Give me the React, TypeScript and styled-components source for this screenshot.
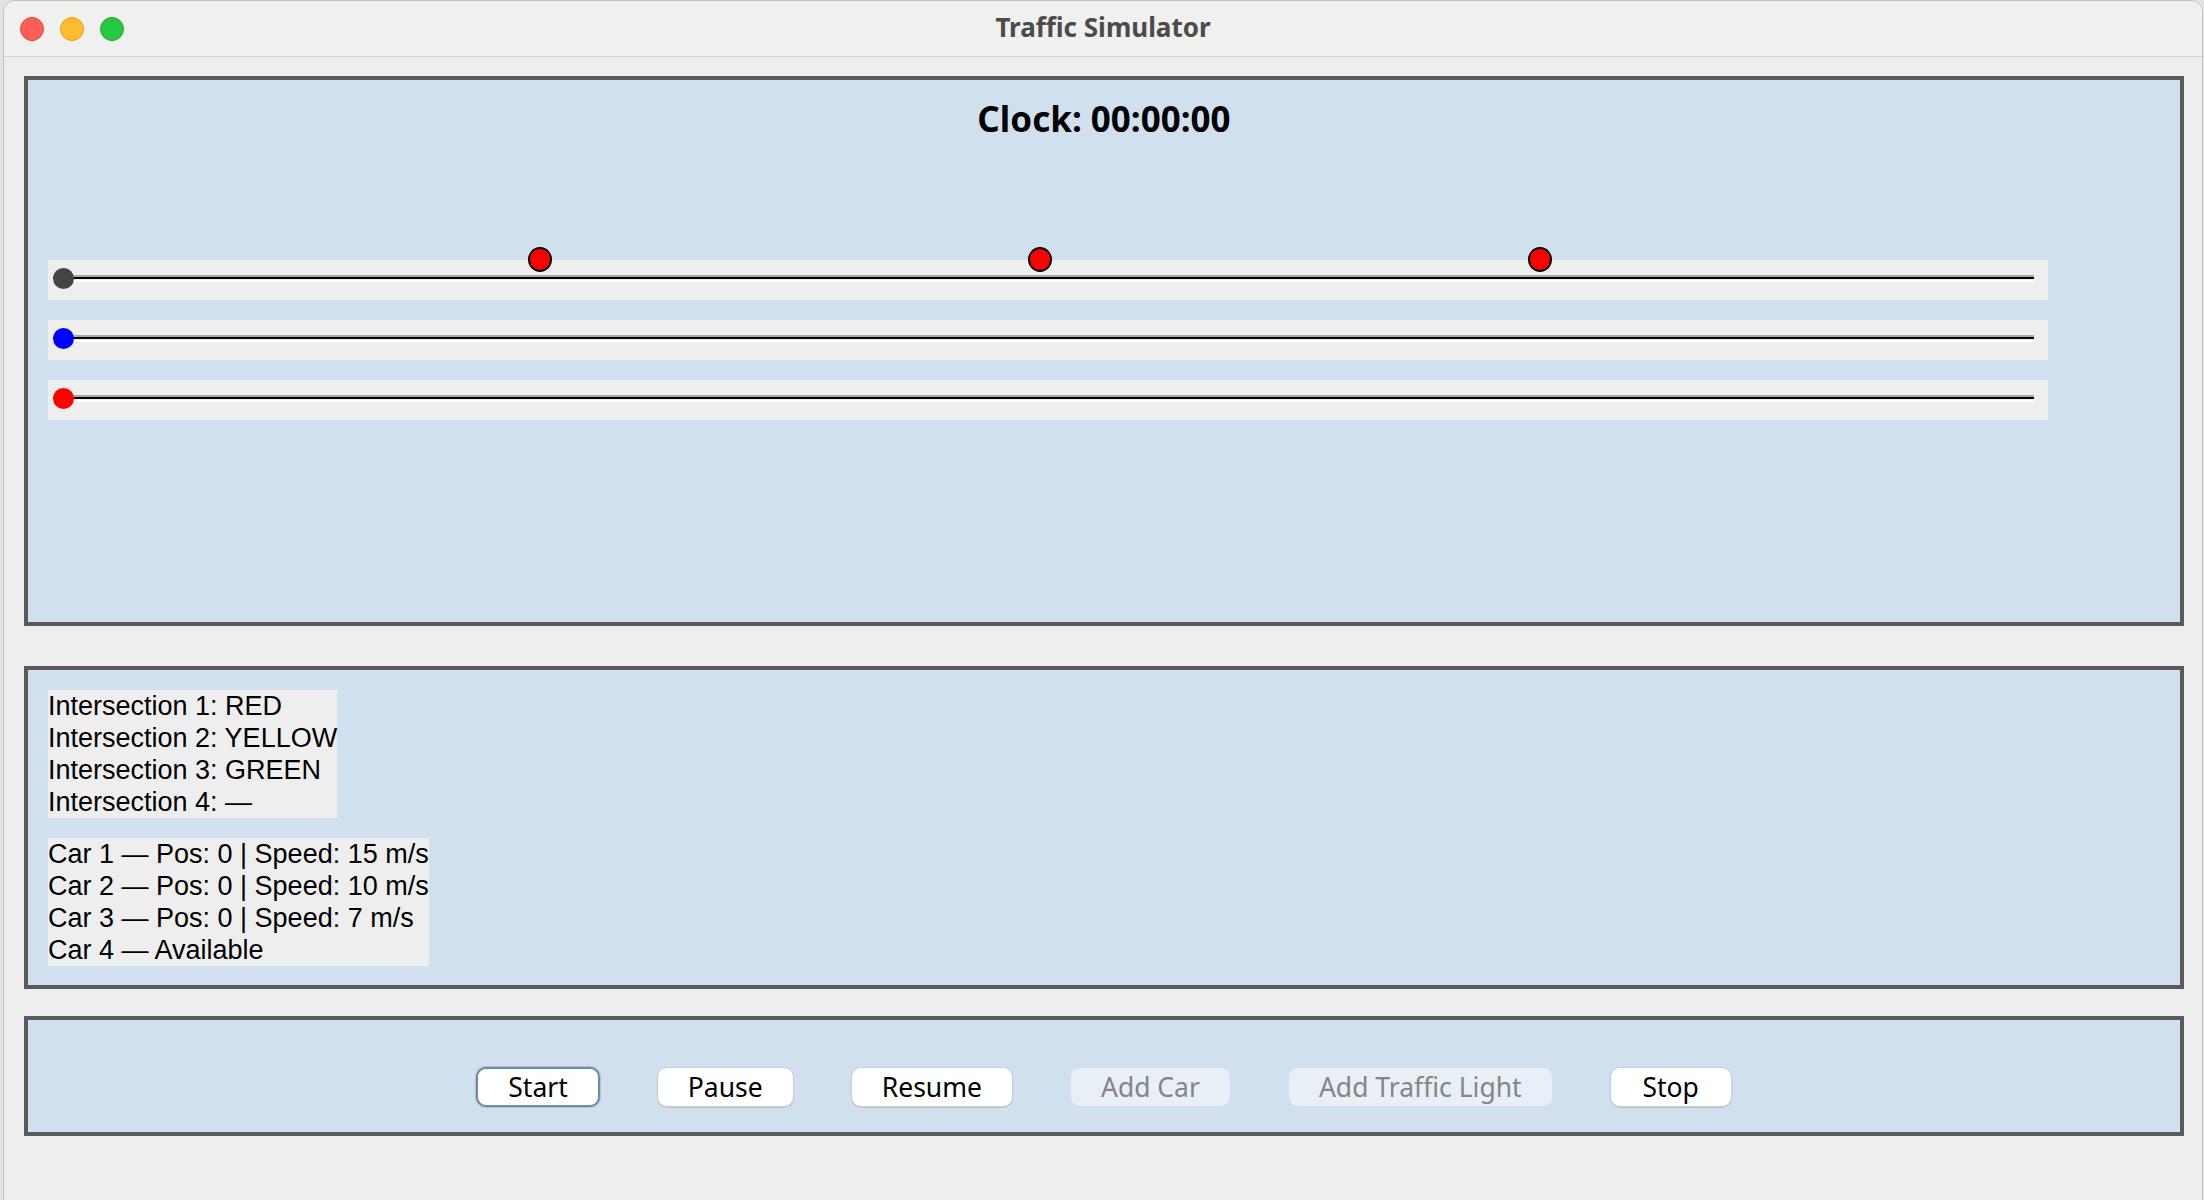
import styled, { createGlobalStyle } from 'styled-components'

const GlobalStyle = createGlobalStyle`
  html, body {
    margin: 0;
    padding: 0;
    background: #e2e2e2;
  }
  body {
    font-family: "Noto Sans", "DejaVu Sans", sans-serif;
  }
  #root {
    width: 2204px;
    height: 1200px;
    overflow: hidden;
  }
`

const Window = styled.div`
  margin-left: 3px;
  width: 2200px;
  height: 1201px;
  box-sizing: border-box;
  background: #eeeeee;
  border: 1px solid #c2c2c2;
  border-radius: 12px 12px 0 0;
  overflow: hidden;
  display: flex;
  flex-direction: column;
`

const TitleBar = styled.header`
  height: 56px;
  flex-shrink: 0;
  box-sizing: border-box;
  display: grid;
  grid-template-columns: 1fr auto 1fr;
  align-items: center;
  background: #f0f0ef;
  border-bottom: 1px solid #d2d2d2;
`

const WindowControls = styled.div`
  display: flex;
  gap: 16px;
  padding-left: 16px;
`

const Dot = styled.span<{ $fill: string; $edge: string }>`
  width: 24px;
  height: 24px;
  border-radius: 50%;
  box-sizing: border-box;
  background: ${(p) => p.$fill};
  border: 1px solid ${(p) => p.$edge};
`

const Title = styled.h1`
  margin: 0 0 3px;
  font-family: "Noto Sans", sans-serif;
  font-size: 26px;
  font-weight: 700;
  color: #4b4b4b;
  line-height: 50px;
`

const Content = styled.main`
  display: flex;
  flex-direction: column;
  padding: 19px 18px 0 20px;
`

const Panel = styled.section<{ $height: number; $gap?: number }>`
  box-sizing: border-box;
  height: ${(p) => p.$height}px;
  margin-top: ${(p) => p.$gap ?? 0}px;
  border: 4px solid #5a5a5a;
  background: #d0e0ef;
`

const SimPanel = styled(Panel)`
  padding: 15px 20px;
`

const Clock = styled.div`
  text-align: center;
  font-size: 35px;
  font-weight: 700;
  line-height: 48px;
  color: #000;
`

const Lanes = styled.div`
  margin-top: 117px;
  width: 2000px;
  display: flex;
  flex-direction: column;
  gap: 20px;
`

const Lane = styled.div`
  position: relative;
  height: 40px;
  box-sizing: border-box;
  padding-top: 15px;
  background: #eeeeee;
`

const Track = styled.div`
  height: 7px;
  margin: 0 14px 0 5px;
  background: linear-gradient(
    to bottom,
    #a8a8a8 0 2px,
    #000 2px 4px,
    #eeeeee 4px 5px,
    #ffffff 5px 7px
  );
`

const Thumb = styled.span<{ $color: string }>`
  position: absolute;
  left: 5px;
  top: 8px;
  width: 21px;
  height: 21px;
  border-radius: 50%;
  background: ${(p) => p.$color};
`

const Light = styled.span`
  position: absolute;
  top: -13px;
  width: 24px;
  height: 25px;
  box-sizing: border-box;
  border-radius: 50%;
  background: #ff0000;
  border: 2px solid #000;
`

const InfoPanel = styled(Panel)`
  padding: 20px;
  display: flex;
  flex-direction: column;
  align-items: flex-start;
  gap: 20px;
`

const InfoBlock = styled.div`
  background: #eeeeee;
  font-family: "Liberation Sans", Arial, sans-serif;
  font-size: 27px;
  line-height: 32px;
  color: #000;
`

const ControlPanel = styled(Panel)`
  padding-top: 47px;
  display: flex;
  justify-content: center;
  align-items: flex-start;
  gap: 57px;
`

const Button = styled.button<{ $primary?: boolean }>`
  height: 40px;
  min-width: 122px;
  box-sizing: border-box;
  padding: 0 30px;
  display: flex;
  align-items: center;
  justify-content: center;
  font-family: "Noto Sans", sans-serif;
  font-size: 26.5px;
  color: #000;
  background: #ffffff;
  border: ${(p) => (p.$primary ? '2px solid #7489a6' : '1px solid #c9cdd2')};
  border-radius: 10px;
  box-shadow: ${(p) =>
    p.$primary ? '0 0 0 1px rgba(116,137,166,0.35)' : '0 1px 1px rgba(0,0,0,0.12)'};

  &:disabled {
    color: #858585;
    background: #e8eff7;
    border-color: #d6dee7;
    box-shadow: none;
  }
`

const lanes = ['#444444', '#0000ff', '#ff0000']
const lights = [492, 992, 1492]

const intersections = [
  'Intersection 1: RED',
  'Intersection 2: YELLOW',
  'Intersection 3: GREEN',
  'Intersection 4: —',
]

const cars = [
  'Car 1 — Pos: 0 | Speed: 15 m/s',
  'Car 2 — Pos: 0 | Speed: 10 m/s',
  'Car 3 — Pos: 0 | Speed: 7 m/s',
  'Car 4 — Available',
]

export default function App() {
  return (
    <>
      <GlobalStyle />
      <Window>
        <TitleBar>
          <WindowControls>
            <Dot $fill="#ff5f57" $edge="#e0443e" />
            <Dot $fill="#febc2e" $edge="#dea123" />
            <Dot $fill="#28c840" $edge="#1aab29" />
          </WindowControls>
          <Title>Traffic Simulator</Title>
          <div />
        </TitleBar>

        <Content>
          <SimPanel $height={550}>
            <Clock>Clock: 00:00:00</Clock>
            <Lanes>
              {lanes.map((color, i) => (
                <Lane key={color}>
                  <Track />
                  <Thumb $color={color} />
                  {i === 0 &&
                    lights.map((x) => <Light key={x} style={{ left: x - 12 }} />)}
                </Lane>
              ))}
            </Lanes>
          </SimPanel>

          <InfoPanel $height={323} $gap={40}>
            <InfoBlock>
              {intersections.map((line) => (
                <div key={line}>{line}</div>
              ))}
            </InfoBlock>
            <InfoBlock>
              {cars.map((line) => (
                <div key={line}>{line}</div>
              ))}
            </InfoBlock>
          </InfoPanel>

          <ControlPanel $height={120} $gap={27}>
            <Button $primary>Start</Button>
            <Button>Pause</Button>
            <Button>Resume</Button>
            <Button disabled>Add Car</Button>
            <Button disabled>Add Traffic Light</Button>
            <Button>Stop</Button>
          </ControlPanel>
        </Content>
      </Window>
    </>
  )
}
